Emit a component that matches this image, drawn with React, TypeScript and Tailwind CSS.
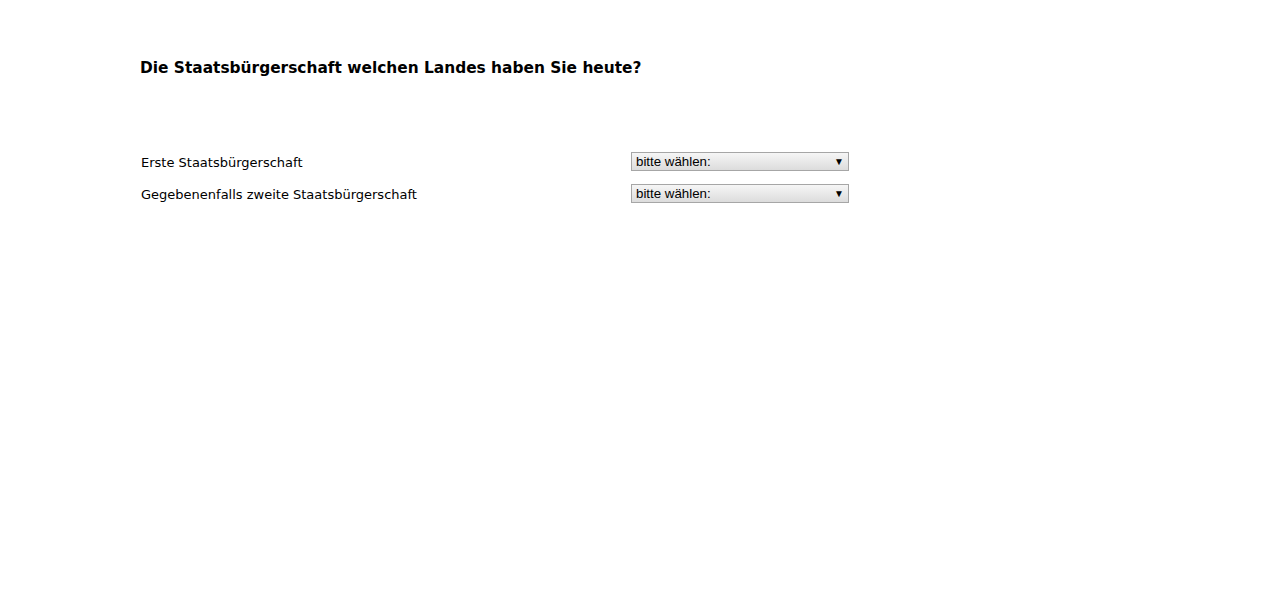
import React from "react";

const rows = ["Erste Staatsbürgerschaft", "Gegebenenfalls zweite Staatsbürgerschaft"];

function FakeSelect() {
  return (
    <div className="flex h-[19px] w-[218px] items-center justify-between border border-[#a6a6a6] bg-gradient-to-b from-[#f6f6f6] to-[#dcdcdc] pl-[4px] pr-[4px] text-[13.3px] leading-none text-black [font-family:'Liberation_Sans',Arial,sans-serif]">
      <span>bitte wählen:</span>
      <span className="text-[10px]">▼</span>
    </div>
  );
}

export default function App() {
  return (
    <div className="min-h-[615px] bg-white pl-[140px] pt-[58px] text-black [font-family:'DejaVu_Sans',Verdana,sans-serif]">
      <h1 className="text-[15.4px] font-bold leading-[20px]">
        Die Staatsbürgerschaft welchen Landes haben Sie heute?
      </h1>
      <div className="mt-[74px] flex flex-col gap-[13px] pl-[1px]">
        {rows.map((label) => (
          <div key={label} className="flex h-[19px] items-center">
            <div className="w-[490px] pt-[1px] text-[13px] leading-[17px]">{label}</div>
            <FakeSelect />
          </div>
        ))}
      </div>
    </div>
  );
}
